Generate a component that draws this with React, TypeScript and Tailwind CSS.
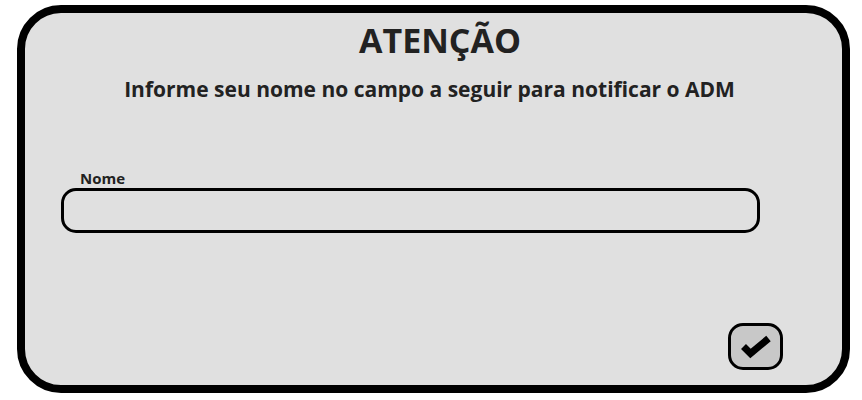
const App = () => {
  return (
    <div className="w-[862px] h-[400px] bg-white pt-[5px] pl-[17px]" style={{ fontFamily: '"Open Sans", "Liberation Sans", sans-serif' }}>
      {/* Modal panel */}
      <div className="w-[833px] h-[388px] bg-[#e0e0e0] border-[8px] border-black rounded-[44px] flex flex-col">
        <h1 className="mt-[7px] pl-[13px] text-center text-[34px] leading-[40px] font-bold text-[#222]">ATENÇÃO</h1>
        <p className="mt-[15px] pr-[8px] text-center text-[21px] leading-[28px] font-bold text-[#222]">
          Informe seu nome no campo a seguir para notificar o ADM
        </p>

        {/* Name field */}
        <div className="mt-[65px] ml-[36px] w-[699px] flex flex-col">
          <label className="pl-[19px] text-[15px] leading-[20px] font-bold text-[#222]">Nome</label>
          <input
            type="text"
            className="h-[45px] w-full rounded-[15px] border-[3px] border-black bg-[#e0e0e0] px-4 outline-none"
          />
        </div>

        {/* Confirm */}
        <div className="mt-[90px] flex justify-end pr-[59px]">
          <button className="w-[55px] h-[47px] rounded-[15px] border-[3px] border-black bg-[#c8c8c8] flex items-center justify-center">
            <svg width="30" height="22" viewBox="0 0 30 22" className="mt-[2px] overflow-visible">
              <polyline points="2.5,9.5 9.5,16.5 27.5,1.5" fill="none" stroke="black" strokeWidth="7" strokeLinejoin="miter" />
            </svg>
          </button>
        </div>
      </div>
    </div>
  );
};

export default App;
